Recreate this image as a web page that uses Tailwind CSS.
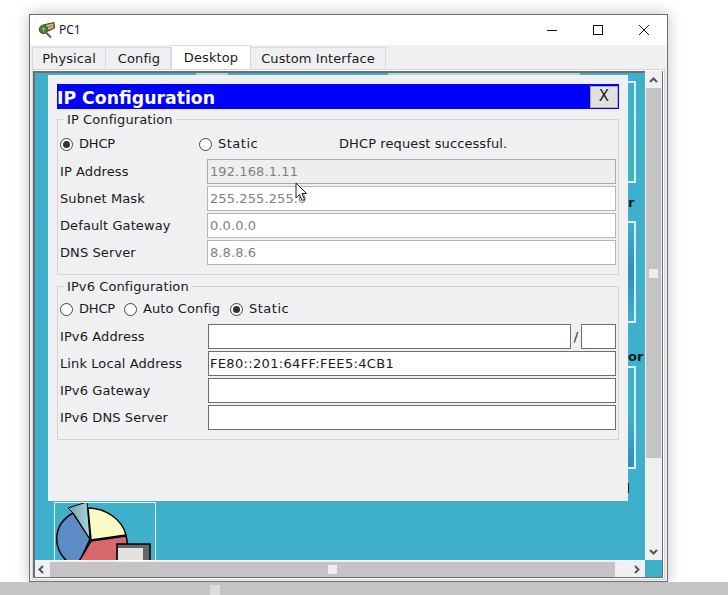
<!DOCTYPE html>
<html lang="en">
<head>
  <meta charset="UTF-8" />
  <title>PC1</title>
  <script src="https://cdn.jsdelivr.net/npm/@tailwindcss/browser@4"></script>
</head>
<body class="bg-white w-[728px] h-[595px] overflow-hidden relative font-['DejaVu_Sans',sans-serif] text-[13px] tracking-[0.1px] text-[#1a1a1a]">

  <!-- Window -->
  <div class="ml-[29px] mt-[14px] w-[639px] h-[568px] border border-[#6e6e6e] bg-[#f0eff1] shadow-[0_0_14px_rgba(0,0,0,0.25)] relative flex flex-col">

    <!-- Title bar -->
    <div class="h-[30px] bg-white flex items-center shrink-0">
      <svg class="ml-[8px] w-[17px] h-[17px]" viewBox="0 0 17 17">
        <path d="M5 3 L16 0.5 L16.5 6 L8 10 Z" fill="#a58c55" stroke="#4a3a20" stroke-width="1"/>
        <path d="M8 4 L15 2.5 M9 7 L15 5" stroke="#e6d6a4" stroke-width="1"/>
        <circle cx="5.5" cy="7.5" r="4" fill="#3f8a34" stroke="#5a5a48" stroke-width="1.5"/>
        <path d="M4 7 H7 M5.5 5.5 V9.5" stroke="#c8b04a" stroke-width="1"/>
        <path d="M8.5 11 L13 15.5" stroke="#555" stroke-width="2"/>
      </svg>
      <span class="ml-[4px] text-[12px] tracking-normal font-['Noto_Sans',sans-serif]">PC1</span>
      <div class="ml-auto flex items-center">
        <svg class="w-[46px] h-[30px]" viewBox="0 0 46 30"><path d="M18 15.5 H28" stroke="#111" stroke-width="1"/></svg>
        <svg class="w-[46px] h-[30px]" viewBox="0 0 46 30"><rect x="18.5" y="10.5" width="9" height="9" fill="none" stroke="#111"/></svg>
        <svg class="w-[46px] h-[30px]" viewBox="0 0 46 30"><path d="M18 10 L28 20 M28 10 L18 20" stroke="#111"/></svg>
      </div>
    </div>

    <!-- Tabs -->
    <div class="h-[24px] flex items-end pl-[2px] shrink-0">
      <div class="w-[74px] h-[22px] border border-[#d9d9d9] border-b-0 flex items-center justify-center">Physical</div>
      <div class="w-[65px] h-[22px] border-r border-t border-[#d9d9d9] flex items-center justify-center pl-[2px]">Config</div>
      <div class="w-[80px] h-[24px] bg-white border-x border-t border-[#d9d9d9] flex items-center justify-center">Desktop</div>
      <div class="w-[135px] h-[22px] border-r border-t border-[#d9d9d9] flex items-center justify-center">Custom Interface</div>
    </div>

    <!-- Desktop frame -->
    <div class="mx-[2px] h-[511px] border border-[#d5d5d5] pt-[1px] pr-[1px] pb-[1px] bg-white">
      <div class="w-full h-full border-l-2 border-r border-b border-[#6e6e6e] bg-[#3fb0cc] grid grid-cols-[1fr_17px] grid-rows-[1fr_17px]">

        <!-- Desktop behind dialog -->
        <div class="relative overflow-hidden border-t-2 border-[#6e6e6e]">
          <div class="absolute left-[161px] top-0 w-[32px] h-[2px] bg-[#a6d8e4]"></div>
          <div class="absolute left-[353px] top-0 w-[192px] h-[2px] bg-[#a6d8e4]"></div>

          <div class="absolute left-[19px] bottom-0 w-[102px] h-[58px] border-l border-t border-r border-[#e6f2f0] overflow-hidden">
            <svg class="absolute left-0 top-0" width="100" height="58" viewBox="0 0 100 58">
              <defs>
                <linearGradient id="teal" x1="0" y1="0" x2="1" y2="0"><stop offset="0" stop-color="#6ea2a8"/><stop offset="1" stop-color="#a8d6d8"/></linearGradient>
              </defs>
              <path d="M35 36 L18 10 C-3 22 -3 46 14 60 H24 Z" fill="#5b8cc6" stroke="#000" stroke-width="1.5"/>
              <path d="M33 5 C50 5 67 16 71 32 L36 37 Z" fill="#fbf9c4" stroke="#000" stroke-width="1.5"/>
              <path d="M36 38 L71 33 C74 42 72 50 66 60 L23 60 Z" fill="#d9686c" stroke="#000" stroke-width="1.5"/>
              <path d="M13 5 L19 11 L35 36 L32 -1 Z" fill="url(#teal)" stroke="#000" stroke-width="1"/>
              <rect x="62" y="41" width="33" height="20" fill="#666" stroke="#000" stroke-width="1.5"/>
              <rect x="63" y="45" width="25" height="16" fill="#e2e2e2"/>
            </svg>
          </div>

          <div class="absolute left-[590px] top-[8px] w-[11px] h-[102px] border-y-2 border-r-2 border-[#d8eef2] bg-linear-to-b from-[#3fb0cc] to-[#40b4b8]"></div>
          <div class="absolute left-[590px] top-[148px] w-[11px] h-[102px] border-y-2 border-r-2 border-[#d8eef2] bg-linear-to-b from-[#3fb0cc] via-[#2b8fc0] to-[#3fb0cc]"></div>
          <div class="absolute left-[590px] top-[293px] w-[11px] h-[103px] border-y-2 border-r-2 border-[#d8eef2] bg-linear-to-b from-[#3fb0cc] via-[#3fb0cc] to-[#2b8fc0]"></div>
          <div class="absolute left-[593px] top-[122px] font-bold text-[13px] leading-[16px]">r</div>
          <div class="absolute left-[593px] top-[276px] font-bold text-[13px] leading-[16px]">or</div>
          <div class="absolute left-[593px] top-[410px] w-[1px] h-[10px] bg-[#1a1a1a]"></div>

          <!-- IP Configuration dialog -->
          <div class="absolute left-[13px] top-[2px] w-[580px] h-[426px] bg-[#f0eff1] px-[9px] pt-[9px]">
            <div class="h-[25px] bg-[#0000ff] border border-[#0000ff] flex items-center justify-between">
              <span class="text-white font-bold text-[17.3px] tracking-normal leading-none -ml-[1px] mt-[4px]">IP Configuration</span>
              <span class="w-[28px] h-[22px] bg-[#e1e1e1] border border-[#adadad] flex items-center justify-center text-[15px] tracking-normal">X</span>
            </div>

            <!-- IPv4 -->
            <fieldset class="mt-[4px] h-[162px] border border-[#d5d3d6] px-[2px]">
              <legend class="ml-[4px] px-[3px] leading-none -mb-[3px]">IP Configuration</legend>
              <div class="flex items-center h-[22px] mt-[10px]">
                <span class="w-[13px] h-[13px] rounded-full border border-[#444] bg-white flex items-center justify-center"><span class="w-[7px] h-[7px] rounded-full bg-[#333]"></span></span>
                <span class="ml-[6px] w-[120px] tracking-[-0.2px]">DHCP</span>
                <span class="w-[13px] h-[13px] rounded-full border border-[#444] bg-white"></span>
                <span class="ml-[6px] w-[121px] tracking-[0.5px]">Static</span>
                <span>DHCP request successful.</span>
              </div>
              <div class="flex flex-col gap-[2px] mt-[4px]">
                <div class="flex items-center h-[25px]"><span class="w-[147px]">IP Address</span><div class="flex-1 h-[25px] border border-[#a9a9a9] bg-[#eeeeee] px-[2px] flex items-center text-[#808080]">192.168.1.11</div></div>
                <div class="flex items-center h-[25px]"><span class="w-[147px]">Subnet Mask</span><div class="flex-1 h-[25px] border border-[#b5b5b5] bg-white px-[2px] flex items-center text-[#808080]">255.255.255.0</div></div>
                <div class="flex items-center h-[25px]"><span class="w-[147px]">Default Gateway</span><div class="flex-1 h-[25px] border border-[#b5b5b5] bg-white px-[2px] flex items-center text-[#808080]">0.0.0.0</div></div>
                <div class="flex items-center h-[25px]"><span class="w-[147px]">DNS Server</span><div class="flex-1 h-[25px] border border-[#b5b5b5] bg-white px-[2px] flex items-center text-[#808080]">8.8.8.6</div></div>
              </div>
            </fieldset>

            <!-- IPv6 -->
            <fieldset class="mt-[5px] h-[160px] border border-[#d5d3d6] px-[2px]">
              <legend class="ml-[4px] px-[3px] leading-none -mb-[3px]">IPv6 Configuration</legend>
              <div class="flex items-center h-[22px] mt-[8px]">
                <span class="w-[13px] h-[13px] rounded-full border border-[#444] bg-white"></span>
                <span class="ml-[6px] w-[45px] tracking-[-0.2px]">DHCP</span>
                <span class="w-[13px] h-[13px] rounded-full border border-[#444] bg-white"></span>
                <span class="ml-[6px] w-[87px]">Auto Config</span>
                <span class="w-[13px] h-[13px] rounded-full border border-[#444] bg-white flex items-center justify-center"><span class="w-[7px] h-[7px] rounded-full bg-[#333]"></span></span>
                <span class="ml-[6px] tracking-[0.5px]">Static</span>
              </div>
              <div class="flex flex-col gap-[2px] mt-[4px]">
                <div class="flex items-center h-[25px]"><span class="w-[148px]">IPv6 Address</span><div class="w-[363px] h-[25px] border border-[#6e6e6e] bg-white"></div><span class="w-[10px] text-center">/</span><div class="w-[35px] h-[25px] border border-[#6e6e6e] bg-white"></div></div>
                <div class="flex items-center h-[25px]"><span class="w-[148px]">Link Local Address</span><div class="flex-1 h-[25px] border border-[#6e6e6e] bg-white px-[1px] flex items-center tracking-[0.33px]">FE80::201:64FF:FEE5:4CB1</div></div>
                <div class="flex items-center h-[25px]"><span class="w-[148px]">IPv6 Gateway</span><div class="flex-1 h-[25px] border border-[#6e6e6e] bg-white"></div></div>
                <div class="flex items-center h-[25px]"><span class="w-[148px]">IPv6 DNS Server</span><div class="flex-1 h-[25px] border border-[#6e6e6e] bg-white"></div></div>
              </div>
            </fieldset>
          </div>
        </div>

        <!-- Vertical scrollbar -->
        <div class="bg-[#f0eff1] flex flex-col items-start border-l border-white">
          <svg class="w-[15px] h-[17px] shrink-0" viewBox="0 0 15 17"><path d="M4 11 L7.5 7.5 L11 11" fill="none" stroke="#555" stroke-width="2"/></svg>
          <div class="w-[15px] h-[370px] bg-[#c5c3c5] flex items-center justify-center shrink-0"><span class="w-[9px] h-[9px] bg-[#eeeeee]"></span></div>
          <svg class="w-[15px] h-[17px] shrink-0 mt-auto" viewBox="0 0 15 17"><path d="M4 7 L7.5 10.5 L11 7" fill="none" stroke="#555" stroke-width="2"/></svg>
        </div>

        <!-- Horizontal scrollbar -->
        <div class="bg-[#f0eff1] flex items-center border-t border-white">
          <svg class="w-[15px] h-[15px] shrink-0" viewBox="0 0 15 15"><path d="M8 4 L4.5 7.5 L8 11" fill="none" stroke="#555" stroke-width="2"/></svg>
          <div class="w-[565px] h-[15px] bg-[#c5c3c5] flex items-center justify-center shrink-0"><span class="w-[9px] h-[9px] bg-[#eeeeee]"></span></div>
          <svg class="w-[17px] h-[15px] shrink-0 ml-auto" viewBox="0 0 17 15"><path d="M7 4 L10.5 7.5 L7 11" fill="none" stroke="#555" stroke-width="2"/></svg>
        </div>
        <div class="bg-[#3fb0cc]"></div>
      </div>
    </div>
  </div>

  <!-- Mouse cursor over the dialog -->
  <svg class="absolute left-[295px] top-[182px]" width="13" height="21" viewBox="0 0 13 21">
    <path d="M1 1 V16 L4.5 12.5 L7 18.5 L9.5 17.5 L7 11.5 H11.5 Z" fill="#fff" stroke="#222" stroke-width="1"/>
  </svg>

  <!-- Bottom strip -->
  <div class="absolute left-0 right-0 bottom-0 h-[13px] bg-[#c5c3c5]">
    <div class="absolute left-[210px] top-[3px] w-[10px] h-[10px] bg-[#dddddd]"></div>
  </div>
</body>
</html>
